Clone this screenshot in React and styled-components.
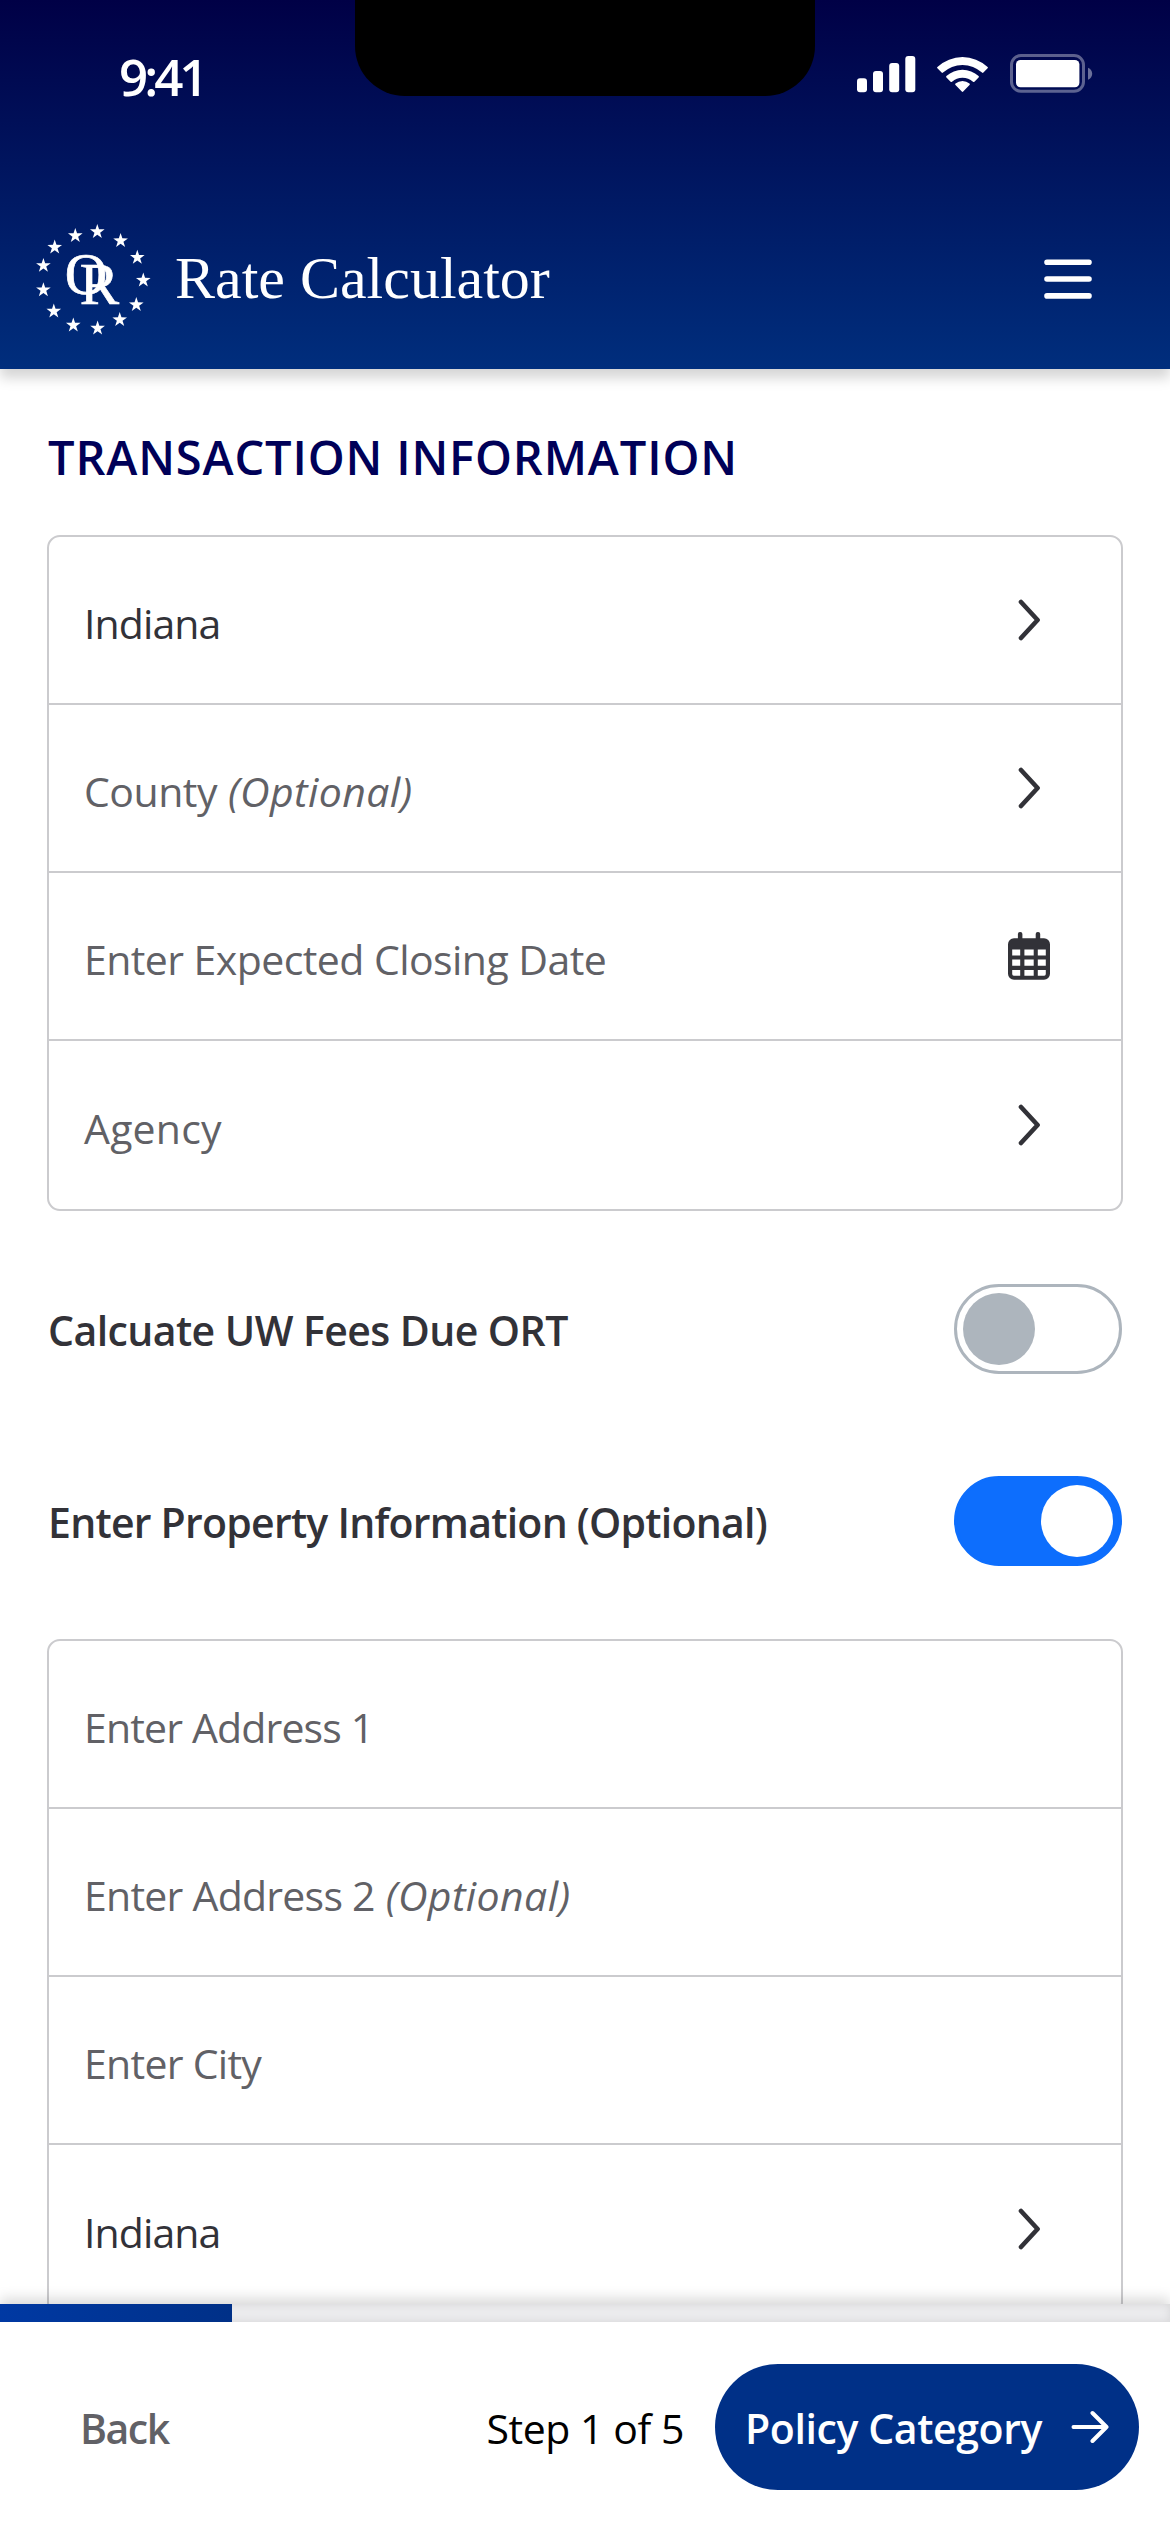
import styled, { createGlobalStyle } from 'styled-components';

const fields = [
  { label: 'Indiana', filled: true, icon: 'chevron', spacing: -0.9 },
  { label: 'County', optional: true, icon: 'chevron', spacing: -0.5 },
  { label: 'Enter Expected Closing Date', icon: 'calendar', spacing: -0.56 },
  { label: 'Agency', icon: 'chevron', spacing: 0.2 },
];

const propertyFields = [
  { label: 'Enter Address 1', spacing: -0.84 },
  { label: 'Enter Address 2', optional: true, spacing: -0.75 },
  { label: 'Enter City', spacing: -0.72 },
  { label: 'Indiana', filled: true, icon: 'chevron', spacing: -0.9 },
];

const stars = [
  [77.3, 21.2], [100.6, 30.3], [117.3, 47], [123.3, 69.8], [116.3, 94.3], [99.7, 109.3], [77.6, 117.7],
  [53.3, 114.7], [33.8, 100.7], [23.4, 79.4], [23.4, 55.1], [34.7, 36.8], [55.3, 25.2],
];

const starPoints = (cx, cy) =>
  Array.from({ length: 10 }, (_, i) => {
    const r = i % 2 ? 3 : 7.7;
    const a = (Math.PI / 5) * i - Math.PI / 2;
    return `${(cx + r * Math.cos(a)).toFixed(2)},${(cy + 0.5 + r * Math.sin(a)).toFixed(2)}`;
  }).join(' ');

const Logo = () => (
  <svg width="150" height="142" viewBox="0 -2 150 142" fill="#fff">
    {stars.map(([x, y]) => (
      <polygon key={`${x}-${y}`} points={starPoints(x, y)} />
    ))}
    <Monogram x="44.8" y="84.3">O</Monogram>
    <Monogram x="59.8" y="93.6">R</Monogram>
  </svg>
);

const StatusIcons = () => (
  <svg width="236" height="40" viewBox="857 54 236 40" fill="#fff">
    <rect x="857" y="78.3" width="10" height="13.9" rx="3" />
    <rect x="873" y="71" width="10" height="21.2" rx="3" />
    <rect x="889.2" y="63" width="10" height="29.2" rx="3" />
    <rect x="905.3" y="56" width="10" height="36.2" rx="3" />
    <path d="M937.4 66.9a37 37 0 0 1 50.2 0a1 1 0 0 1 0 1.4l-4.2 4.3a1 1 0 0 1-1.4 0a28.6 28.6 0 0 0-39 0a1 1 0 0 1-1.4 0l-4.2-4.3a1 1 0 0 1 0-1.4z" />
    <path d="M946.4 76a24 24 0 0 1 32.2 0a1 1 0 0 1 0 1.4l-4.2 4.3a1 1 0 0 1-1.4 0a16 16 0 0 0-21 0a1 1 0 0 1-1.4 0l-4.2-4.3a1 1 0 0 1 0-1.4z" />
    <path d="M955.5 83.4a11 11 0 0 1 14 0a1 1 0 0 1 0 1.5l-6.3 6.7a1 1 0 0 1-1.4 0l-6.3-6.7a1 1 0 0 1 0-1.5z" />
    <rect x="1011.5" y="55.5" width="72" height="35.8" rx="9.5" fill="none" stroke="#fff" strokeWidth="3" opacity=".36" />
    <rect x="1016" y="60" width="63.4" height="27.2" rx="4.5" />
    <path d="M1088 67.8c2.8 1.2 4.2 3.4 4.2 6s-1.4 4.8-4.2 6z" opacity=".42" />
  </svg>
);

const MenuIcon = () => (
  <svg width="48" height="40" viewBox="0 0 48 40" stroke="#fff" strokeWidth="5.6" strokeLinecap="round">
    <path d="M3 3.3h42M3 20h42M3 36.9h42" />
  </svg>
);

const Chevron = () => (
  <svg width="24" height="42" viewBox="0 0 24 42" fill="none" stroke="#323238" strokeWidth="4.6" strokeLinecap="round" strokeLinejoin="round">
    <path d="M4 3l16.6 18L4 39" />
  </svg>
);

const CalendarIcon = () => (
  <svg width="42" height="48" viewBox="0 0 42 48" fill="#323238">
    <rect x="9.9" y="0" width="4.5" height="10" rx="2" />
    <rect x="27.7" y="0" width="4.5" height="10" rx="2" />
    <path
      fillRule="evenodd"
      d="M6 6.2h30a6 6 0 0 1 6 6v29.5a6 6 0 0 1-6 6H6a6 6 0 0 1-6-6V12.2a6 6 0 0 1 6-6zM4.2 17.5v6h8v-6zm12.2 0v6h9.3v-6zm13.4 0v6h8v-6zM4.2 27.6v6.2h8v-6.2zm12.2 0v6.2h9.3v-6.2zm13.4 0v6.2h8v-6.2zM4.2 37.9v4.2a1.6 1.6 0 0 0 1.6 1.6h6.4v-5.8zm12.2 0v5.8h9.3v-5.8zm13.4 0v5.8h6.4a1.6 1.6 0 0 0 1.6-1.6v-4.2z"
    />
  </svg>
);

const ArrowIcon = () => (
  <svg width="38" height="34" viewBox="0 0 38 34" fill="none" stroke="#fff" strokeWidth="4" strokeLinecap="round" strokeLinejoin="round">
    <path d="M2.5 17h33M21.5 3l14 14l-14 14" />
  </svg>
);

const FieldList = ({ items }) => (
  <Card>
    {items.map(({ label, optional, filled, icon, spacing }) => (
      <Row key={label}>
        <RowText $filled={filled} $spacing={spacing}>
          {label}
          {optional && <em> (Optional)</em>}
        </RowText>
        {icon && <RowIcon>{icon === 'calendar' ? <CalendarIcon /> : <Chevron />}</RowIcon>}
      </Row>
    ))}
  </Card>
);

export default function App() {
  return (
    <Screen>
      <GlobalStyle />
      <Header>
        <StatusBar>
          <Time>9:41</Time>
          <Notch />
          <StatusIcons />
        </StatusBar>
        <NavBar>
          <Logo />
          <AppName>Rate Calculator</AppName>
          <MenuIcon />
        </NavBar>
      </Header>
      <Content>
        <Title>TRANSACTION INFORMATION</Title>
        <FieldList items={fields} />
        <Switches>
          <SwitchRow>
            <SwitchLabel $spacing={-0.57}>Calcuate UW Fees Due ORT</SwitchLabel>
            <Toggle>
              <Knob />
            </Toggle>
          </SwitchRow>
          <SwitchRow>
            <SwitchLabel $spacing={-0.75}>Enter Property Information (Optional)</SwitchLabel>
            <Toggle $on>
              <Knob $on />
            </Toggle>
          </SwitchRow>
        </Switches>
        <FieldList items={propertyFields} />
      </Content>
      <Footer>
        <Progress>
          <ProgressFill />
        </Progress>
        <Actions>
          <Back>Back</Back>
          <Step>Step 1 of 5</Step>
          <NextButton>
            <NextLabel>Policy Category</NextLabel>
            <ArrowIcon />
          </NextButton>
        </Actions>
      </Footer>
    </Screen>
  );
}

const GlobalStyle = createGlobalStyle`
  * {
    box-sizing: border-box;
  }

  body {
    margin: 0;
    background: #fff;
    font-family: 'Open Sans', 'Noto Sans', sans-serif;
  }

  svg {
    display: block;
    flex: none;
  }
`;

const Screen = styled.div`
  width: 1170px;
  height: 2532px;
  display: flex;
  flex-direction: column;
  overflow: hidden;
  background: #fff;
`;

const Header = styled.header`
  flex: none;
  height: 369px;
  background: linear-gradient(180deg, #000046 0%, #002e7d 100%);
  box-shadow: 0 9px 12px rgba(0, 0, 0, 0.17);
`;

const StatusBar = styled.div`
  height: 96px;
  display: grid;
  grid-template-columns: 355px 460px 1fr;

  > svg {
    margin: 54px 0 0 42px;
  }
`;

const Time = styled.div`
  padding: 41px 0 0 119px;
  font-size: 51px;
  font-weight: 600;
  line-height: 70px;
  letter-spacing: -4px;
  color: #fff;
`;

const Notch = styled.div`
  height: 96px;
  background: #000;
  border-radius: 0 0 50px 50px;
`;

const NavBar = styled.div`
  display: flex;
  align-items: center;
  margin-top: 114px;
  padding: 0 78px 0 20px;
  height: 138px;
`;

const AppName = styled.div`
  flex: 1;
  margin-left: 5px;
  padding-bottom: 2px;
  font-family: 'Liberation Serif', serif;
  font-size: 60px;
  line-height: 70px;
  color: #fff;
`;

const Monogram = styled.text`
  font-family: 'Liberation Serif', serif;
  font-size: 59px;
  stroke: #fff;
  stroke-width: 0.7px;
`;

const Content = styled.main`
  flex: 1;
  min-height: 0;
  overflow: hidden;
  padding: 56px 47px 0;
`;

const Title = styled.h1`
  margin: 0 0 46px 1px;
  font-size: 47px;
  font-weight: 600;
  line-height: 64px;
  letter-spacing: 0.85px;
  white-space: nowrap;
  color: #000058;
`;

const Card = styled.div`
  border: 2px solid #cbcbce;
  border-radius: 13px;
`;

const Row = styled.div`
  display: flex;
  align-items: center;
  justify-content: space-between;
  height: 168px;
  padding-left: 35px;
  border-bottom: 2px solid #cbcbce;

  &:last-child {
    border-bottom: 0;
  }
`;

const RowText = styled.div`
  padding-top: 6px;
  font-size: 41px;
  line-height: 56px;
  letter-spacing: ${(props) => props.$spacing}px;
  white-space: pre;
  color: ${(props) => (props.$filled ? '#323238' : '#616166')};

  em {
    letter-spacing: 0.4px;
  }
`;

const RowIcon = styled.div`
  display: flex;
  justify-content: center;
  width: 42px;
  margin-right: 71px;
`;

const Switches = styled.div`
  display: flex;
  flex-direction: column;
  gap: 102px;
  margin: 73px 0;
`;

const SwitchRow = styled.div`
  display: flex;
  align-items: center;
  justify-content: space-between;
  height: 90px;
  padding: 0 1px;
`;

const SwitchLabel = styled.div`
  padding-top: 2px;
  font-size: 41px;
  font-weight: 600;
  line-height: 56px;
  letter-spacing: ${(props) => props.$spacing}px;
  color: #323238;
`;

const Toggle = styled.div`
  display: flex;
  align-items: center;
  justify-content: ${(props) => (props.$on ? 'flex-end' : 'flex-start')};
  width: 168px;
  height: 90px;
  padding: 0 6px;
  border: 3px solid ${(props) => (props.$on ? '#0d6efd' : '#adb5bd')};
  border-radius: 45px;
  background: ${(props) => (props.$on ? '#0d6efd' : '#fff')};
`;

const Knob = styled.div`
  width: 72px;
  height: 72px;
  border-radius: 50%;
  background: ${(props) => (props.$on ? '#fff' : '#adb5bd')};
`;

const Footer = styled.footer`
  flex: none;
  height: 228px;
  background: #fff;
  box-shadow: 0 -6px 12px rgba(0, 0, 0, 0.14);
`;

const Progress = styled.div`
  height: 18px;
  background: #ebebed;
  box-shadow: inset 0 0 9px rgba(0, 0, 0, 0.09);
`;

const ProgressFill = styled.div`
  width: 231.5px;
  height: 18px;
  background: linear-gradient(90deg, #0039a3, #003087);
`;

const Actions = styled.div`
  display: flex;
  align-items: center;
  height: 210px;
  padding: 0 31px 0 80px;
  font-size: 41px;
  line-height: 56px;
`;

const Back = styled.div`
  flex: 1;
  padding-top: 2px;
  font-weight: 600;
  letter-spacing: -1.5px;
  color: #616166;
`;

const Step = styled.div`
  padding-top: 2px;
  margin-right: 31px;
  letter-spacing: -0.45px;
  color: #000;
`;

const NextButton = styled.div`
  display: flex;
  align-items: center;
  justify-content: space-between;
  width: 424px;
  height: 126px;
  padding: 0 30px;
  border-radius: 63px;
  color: #fff;
  background: #003087;
`;

const NextLabel = styled.span`
  padding-top: 2px;
  font-weight: 600;
  letter-spacing: -0.4px;
`;
